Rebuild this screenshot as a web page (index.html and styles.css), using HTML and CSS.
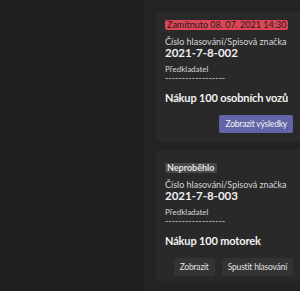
FILE: index.html
```html
<!DOCTYPE html>
<html lang="cs">
<head>
<meta charset="utf-8">
<link rel="stylesheet" href="styles.css">
</head>
<body>
<div class="layout">
  <div class="side"></div>
  <div class="panel">
    <div class="list">
      <div class="list-inner">
        <div class="card">
          <span class="badge badge-red">Zamítnuto 08. 07. 2021 14:30</span>
          <div class="label">Číslo hlasování/Spisová značka</div>
          <div class="number">2021-7-8-002</div>
          <div class="small">Předkladatel</div>
          <div class="dashes">------------------</div>
          <div class="title">Nákup 100 osobních vozů</div>
          <div class="actions">
            <button class="btn btn-primary">Zobrazit výsledky</button>
          </div>
        </div>
        <div class="card">
          <span class="badge badge-grey">Neproběhlo</span>
          <div class="label">Číslo hlasování/Spisová značka</div>
          <div class="number">2021-7-8-003</div>
          <div class="small">Předkladatel</div>
          <div class="dashes">------------------</div>
          <div class="title">Nákup 100 motorek</div>
          <div class="actions">
            <button class="btn">Zobrazit</button>
            <button class="btn">Spustit hlasování</button>
          </div>
        </div>
      </div>
    </div>
  </div>
</div>
</body>
</html>
```
FILE: styles.css
```css
html, body {
  margin: 0;
  padding: 0;
  background: #1f1f1f;
  overflow: hidden;
  height: 291px;
}
body {
  font-family: Lato, "Open Sans", sans-serif;
  color: #d6d6d6;
}
.layout {
  display: flex;
  height: 291px;
}
.side {
  width: 144px;
  flex: none;
}
.panel {
  flex: none;
  width: 170px;
  background: #232323;
  padding: 12px 0 10px 12px;
  box-sizing: border-box;
  display: flex;
  flex-direction: column;
}
.list {
  flex: 1;
  overflow: hidden;
}
.list-inner {
  margin-top: -5px;
  display: flex;
  flex-direction: column;
  gap: 8px;
}
.card {
  width: 146px;
  background: #292929;
  border-radius: 3px;
  padding: 13px 9px 9px 9px;
  box-sizing: border-box;
  display: flex;
  flex-direction: column;
  align-items: flex-start;
}
.badge {
  font-size: 9px;
  line-height: 10px;
  padding: 0 2px;
  border-radius: 2px;
  white-space: nowrap;
  margin-bottom: 6px;
}
.badge-red {
  background: #dc4656;
  color: #2a1a1c;
}
.badge-grey {
  background: #484848;
  color: #e2e2e2;
  font-weight: 700;
}
.label {
  font-size: 9px;
  line-height: 11px;
  white-space: nowrap;
}
.number {
  font-size: 11.5px;
  line-height: 12px;
  font-weight: 700;
  color: #f0f0f0;
  margin-bottom: 5px;
}
.small {
  font-size: 8px;
  line-height: 10px;
}
.dashes {
  font-size: 8.5px;
  line-height: 8px;
  letter-spacing: 0.2px;
  margin-bottom: 8px;
}
.title {
  font-size: 11px;
  line-height: 16px;
  letter-spacing: -0.15px;
  font-weight: 700;
  color: #f2f2f2;
  white-space: nowrap;
}
.actions {
  align-self: stretch;
  display: flex;
  justify-content: flex-end;
  gap: 7px;
  margin-top: 9px;
}
.btn {
  font-family: inherit;
  font-size: 8.5px;
  letter-spacing: -0.2px;
  height: 18px;
  padding: 0 6px;
  border: none;
  border-radius: 2px;
  background: #333333;
  color: #e0e0e0;
  white-space: nowrap;
}
.btn-primary {
  background: #6264a7;
  color: #f4f4f4;
}
```
